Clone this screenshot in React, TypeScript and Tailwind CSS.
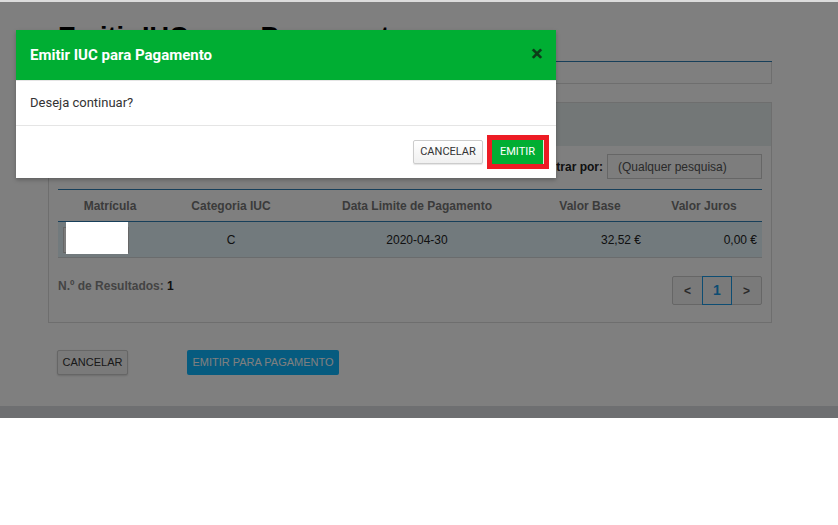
import React from "react";

interface Linha {
    categoria: string;
    dataLimite: string;
    valorBase: string;
    valorJuros: string;
}

const linhas: Linha[] = [
    { categoria: "C", dataLimite: "2020-04-30", valorBase: "32,52 €", valorJuros: "0,00 €" },
];

// Modal de confirmação
const ConfirmModal: React.FC = () => (
    <div className="absolute left-[16px] top-[28px] w-[540px] bg-white font-['Roboto',Arial,sans-serif] shadow-[0_2px_4px_rgba(0,0,0,0.25)]">
        <div className="h-[51px] bg-[#00ae33] border-b border-[#e5e5e5] px-[14px] flex items-center justify-between">
            <h4 className="text-[15px] font-bold text-white">Emitir IUC para Pagamento</h4>
            <button className="text-[22px] leading-none font-bold text-[#0d3d18] -mr-[1px] -mt-[2px]">×</button>
        </div>
        <div className="h-[45px] border-b border-[#e5e5e5] px-[14px] flex items-center text-[13px] text-[#333]">
            Deseja continuar?
        </div>
        <div className="h-[52px] flex items-center justify-end gap-[4px] pr-[7px]">
            <button className="h-[24px] w-[70px] border border-[#ccc] rounded-[2px] bg-gradient-to-b from-white to-[#f0f0f0] text-[11px] text-[#333] shadow-[0_1px_1px_rgba(0,0,0,0.1)]">
                CANCELAR
            </button>
            <div className="border-[5px] border-[#ed1c24]">
                <button className="h-[24px] w-[52px] bg-[#00ae33] border-r border-[#d8f5e0] text-[11px] text-white block">
                    EMITIR
                </button>
            </div>
        </div>
    </div>
);

export default function App() {
    return (
        <div className="w-[838px] h-[525px] bg-white overflow-hidden font-['Liberation_Sans',Arial,sans-serif]">
            <div className="h-[2px] bg-[#dcdcdc]" />
            <div className="relative h-[416px] bg-white flex flex-col">
                <div className="ml-[48px] w-[724px]">
                    {/* Título */}
                    <h1 className="ml-[10px] mt-[20px] h-[40px] border-b border-[#2f7fb5] text-[27px] leading-[30px] font-bold text-black">
                        Emitir IUC para Pagamento
                    </h1>
                    <div className="ml-[10px] h-[22px] border border-t-0 border-[#dcdcdc]" />

                    {/* Painel */}
                    <div className="mt-[18px] border border-[#dcdcdc]">
                        <div className="h-[43px] bg-[#e6eeee]" />
                        <div className="px-[9px] pt-[8px] pb-[17px]">
                            <div className="flex justify-end items-center gap-[4px]">
                                <span className="text-[12px] font-bold text-[#222]">Filtrar por:</span>
                                <div className="w-[155px] h-[25px] border border-[#ccc] bg-[#fafafa] flex items-center pl-[10px] text-[12px] text-[#555]">
                                    (Qualquer pesquisa)
                                </div>
                            </div>

                            <table className="mt-[10px] w-[704px] border-collapse text-[12px]">
                                <thead>
                                    <tr className="h-[32px] border-t border-b border-[#2f7fb5] text-[#777] font-bold">
                                        <th className="w-[104px] text-center">Matrícula</th>
                                        <th className="w-[138px] text-center">Categoria IUC</th>
                                        <th className="w-[234px] text-center">Data Limite de Pagamento</th>
                                        <th className="w-[112px] text-center">Valor Base</th>
                                        <th className="w-[116px] text-center">Valor Juros</th>
                                    </tr>
                                </thead>
                                <tbody>
                                    {linhas.map((l, i) => (
                                        <tr key={i} className="h-[36px] bg-[#e4f4fa] border-b border-[#d4d8da] text-[#222]">
                                            <td className="pl-[5px]">
                                                <div className="w-[66px] h-[26px] border border-[#ccc] bg-[#f8f8f8]" />
                                            </td>
                                            <td className="text-center">{l.categoria}</td>
                                            <td className="text-center">{l.dataLimite}</td>
                                            <td className="text-right pr-[5px]">{l.valorBase}</td>
                                            <td className="text-right pr-[5px]">{l.valorJuros}</td>
                                        </tr>
                                    ))}
                                </tbody>
                            </table>

                            <div className="mt-[18px] flex justify-between items-start">
                                <span className="mt-[1px] text-[12px] font-bold text-[#888]">
                                    N.º de Resultados: <span className="text-[#222]">1</span>
                                </span>
                                <div className="flex h-[29px] border border-[#ccc] rounded-[2px] bg-[#f4f4f4] text-[12px]">
                                    <span className="w-[29px] flex items-center justify-center text-[#555] font-bold">&lt;</span>
                                    <span className="w-[30px] flex items-center justify-center border border-[#1a9ae6] -my-[1px] text-[#1a9ae6] font-bold text-[14px]">1</span>
                                    <span className="w-[29px] flex items-center justify-center text-[#555] font-bold">&gt;</span>
                                </div>
                            </div>
                        </div>
                    </div>

                    {/* Botões */}
                    <div className="mt-[27px] ml-[9px] flex gap-[59px]">
                        <button className="h-[25px] w-[71px] border border-[#ccc] rounded-[2px] bg-[#f4f4f4] text-[11px] text-[#333] shadow-[0_1px_2px_rgba(0,0,0,0.15)]">
                            CANCELAR
                        </button>
                        <button className="h-[25px] w-[152px] rounded-[2px] bg-[#0cb6ff] text-[11px] text-white">
                            EMITIR PARA PAGAMENTO
                        </button>
                    </div>
                </div>

                <div className="mt-auto h-[12px] bg-[#dcdee2]" />

                {/* Fundo escurecido */}
                <div className="absolute inset-0 bg-black/50" />
                {/* Matrícula ocultada */}
                <div className="absolute left-[66px] top-[220px] w-[62px] h-[32px] bg-white" />
                <ConfirmModal />
            </div>
        </div>
    );
}
